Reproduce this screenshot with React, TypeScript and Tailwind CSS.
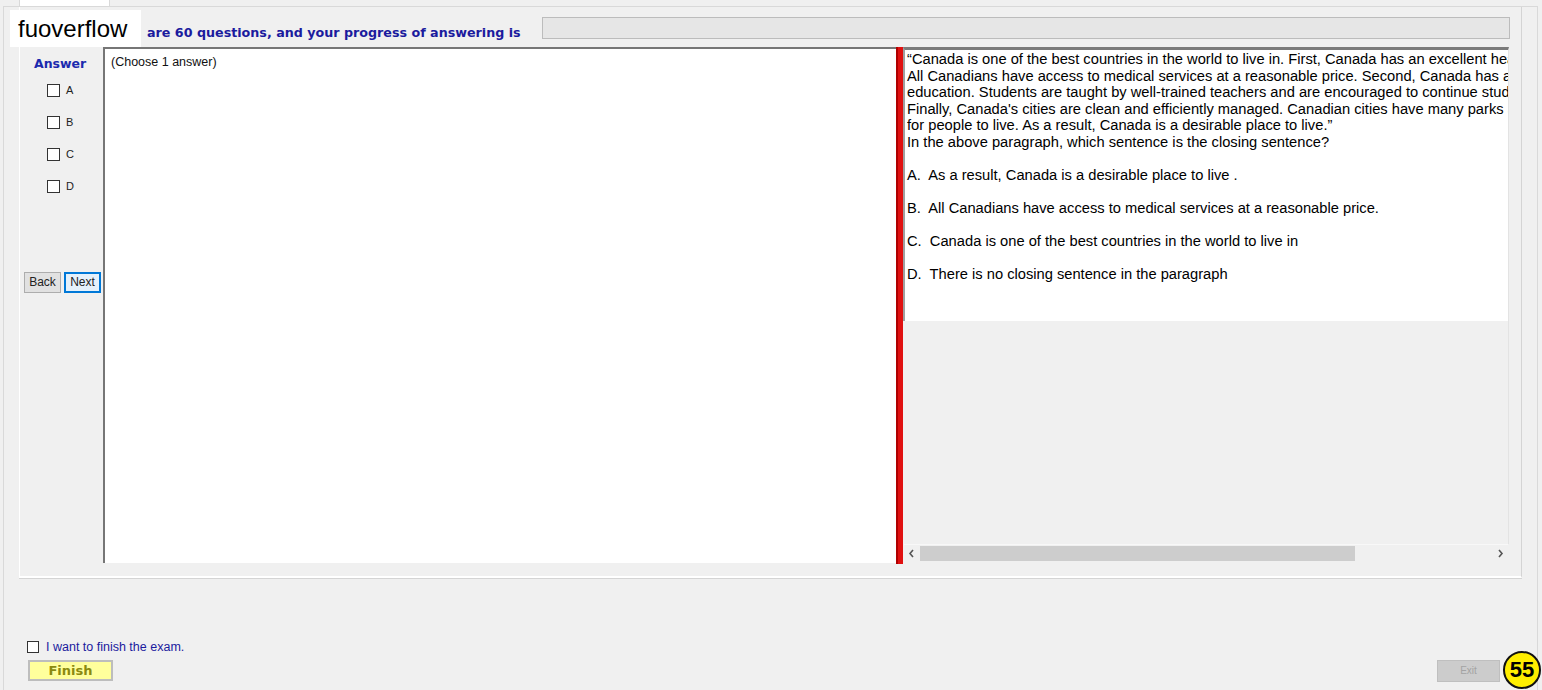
import React from "react";

const passage = [
  "\u201CCanada is one of the best countries in the world to live in. First, Canada has an excellent health care system.",
  "All Canadians have access to medical services at a reasonable price. Second, Canada has a high standard of",
  "education. Students are taught by well-trained teachers and are encouraged to continue studies at university.",
  "Finally, Canada's cities are clean and efficiently managed. Canadian cities have many parks and lots of space",
  "for people to live. As a result, Canada is a desirable place to live.\u201D",
  "In the above paragraph, which sentence is the closing sentence?",
];

const options = [
  "A.  As a result, Canada is a desirable place to live .",
  "B.  All Canadians have access to medical services at a reasonable price.",
  "C.  Canada is one of the best countries in the world to live in",
  "D.  There is no closing sentence in the paragraph",
];

function CheckBox({ label }: { label: string }) {
  return (
    <div className="flex items-center h-[13px]">
      <div className="w-[13px] h-[13px] border border-[#333] bg-white" />
      <span className="ml-[6px] text-[11px] leading-[13px] text-[#222]">{label}</span>
    </div>
  );
}

export default function App() {
  return (
    <div className="relative w-[1542px] h-[690px] overflow-hidden bg-[#f0f0f0] flex flex-col font-['Liberation_Sans',Arial,sans-serif]">
      {/* tab strip */}
      <div className="h-[6px] pl-[19px] shrink-0">
        <div className="w-[91px] h-full bg-white border-x border-[#d9d9d9]" />
      </div>

      {/* tab page */}
      <div className="flex-1 ml-[3px] mr-[4px] border border-b-0 border-[#d9d9d9] flex flex-col">
        {/* group box */}
        <div className="ml-[15px] w-[1503px] h-[571px] shrink-0 border-l border-l-white border-r border-r-[#d4d4d4] border-b-2 border-b-white shadow-[0_1px_0_#d4d4d4] pl-[4px] flex flex-col">
          {/* header */}
          <div className="h-[40px] flex items-start shrink-0">
            <span className="ml-[123px] mt-[18px] font-['DejaVu_Sans',Verdana,sans-serif] text-[12.7px] leading-[15px] font-bold text-[#1b1b9e] whitespace-nowrap">
              are 60 questions, and your progress of answering is
            </span>
            <div className="ml-auto mr-[11px] mt-[10px] w-[968px] h-[22px] bg-[#e6e6e6] border border-[#bcbcbc]" />
          </div>

          {/* main */}
          <div className="flex h-[516px]">
            {/* answer column */}
            <div className="w-[79px] flex flex-col">
              <span className="pl-[10px] mt-[9px] font-['DejaVu_Sans',Verdana,sans-serif] text-[12.5px] leading-[15px] font-bold text-[#1b2aae]">
                Answer
              </span>
              <div className="pl-[23px] mt-[13px] flex flex-col gap-[19px]">
                <CheckBox label="A" />
                <CheckBox label="B" />
                <CheckBox label="C" />
                <CheckBox label="D" />
              </div>
              <div className="mt-[79px] flex gap-[3px]">
                <button className="w-[37px] h-[21px] bg-[#e1e1e1] border border-[#adadad] text-[12px] leading-[19px] text-[#222]">
                  Back
                </button>
                <button className="w-[37px] h-[21px] bg-[#e5f1fb] border-2 border-[#0078d7] text-[12px] leading-[17px] text-[#222]">
                  Next
                </button>
              </div>
            </div>

            {/* answer box */}
            <div className="w-[793px] h-full bg-white border-t-2 border-l-2 border-[#767676] pl-[6px]">
              <span className="text-[12.5px] leading-[14px] text-[#111]">(Choose 1 answer)</span>
            </div>

            {/* splitter */}
            <div className="w-[7px] h-[517px] bg-[#e01010] border-l-2 border-[#b00000]" />

            {/* question panel */}
            <div className="w-[606px] flex flex-col">
              <div className="h-[274px] bg-white border-t-[3px] border-t-[#7b7b7b] border-l-2 border-l-[#a0a0a0] border-r border-r-[#e3e3e3] pl-[2px] pt-[1px] overflow-hidden text-[14.7px] leading-[16.5px] text-black">
                {passage.map((l) => (
                  <div key={l} className="whitespace-nowrap overflow-hidden">{l}</div>
                ))}
                {options.map((o) => (
                  <div key={o} className="whitespace-pre mt-[16.5px]">{o}</div>
                ))}
              </div>
              <div className="flex-1 border-r border-[#e3e3e3]" />
              <div className="ml-[1px] w-[604px] h-[17px] bg-[#f0f0f0] border-t border-[#f8f8f8] flex items-center">
                <svg width="16" height="15" viewBox="0 0 16 15" className="shrink-0">
                  <path d="M9 4 L6 7.5 L9 11" stroke="#555" strokeWidth="1.6" fill="none" />
                </svg>
                <div className="w-[435px] h-[15px] bg-[#cdcdcd]" />
                <div className="flex-1" />
                <svg width="16" height="15" viewBox="0 0 16 15" className="shrink-0">
                  <path d="M7 4 L10 7.5 L7 11" stroke="#555" strokeWidth="1.6" fill="none" />
                </svg>
              </div>
              <div className="h-[2px]" />
            </div>
          </div>
        </div>

        {/* bottom */}
        <div className="flex-1 flex items-end justify-between pb-[9px]">
          <div className="pl-[23px] flex flex-col">
            <div className="flex items-center h-[14px]">
              <div className="w-[12px] h-[12px] border border-[#333] bg-white" />
              <span className="ml-[7px] text-[12.5px] leading-[14px] text-[#1b1b9e]">
                I want to finish the exam.
              </span>
            </div>
            <button className="mt-[6px] ml-[1px] w-[85px] h-[21px] bg-[#ffff9c] border-2 border-[#bdbdbd] font-['DejaVu_Sans',Verdana,sans-serif] text-[13px] leading-[17px] font-bold text-[#8a8a10]">
              Finish
            </button>
          </div>
          <button className="mr-[37px] mb-[-1px] w-[63px] h-[22px] bg-[#cccccc] border border-[#bfbfbf] text-[10px] leading-[20px] text-[#a3a3a3]">
            Exit
          </button>
        </div>
      </div>

      {/* watermark */}
      <div className="absolute left-[10px] top-[10px] w-[131px] h-[37px] bg-white pl-[8px] flex items-center">
        <span className="text-[24px] leading-[28px] text-black">fuoverflow</span>
      </div>

      {/* counter badge */}
      <div className="absolute left-[1503px] top-[651px] w-[38px] h-[38px] rounded-full bg-[#ffee00] border-2 border-[#111] flex items-center justify-center">
        <span className="text-[22px] leading-[24px] font-bold text-black">55</span>
      </div>
    </div>
  );
}
